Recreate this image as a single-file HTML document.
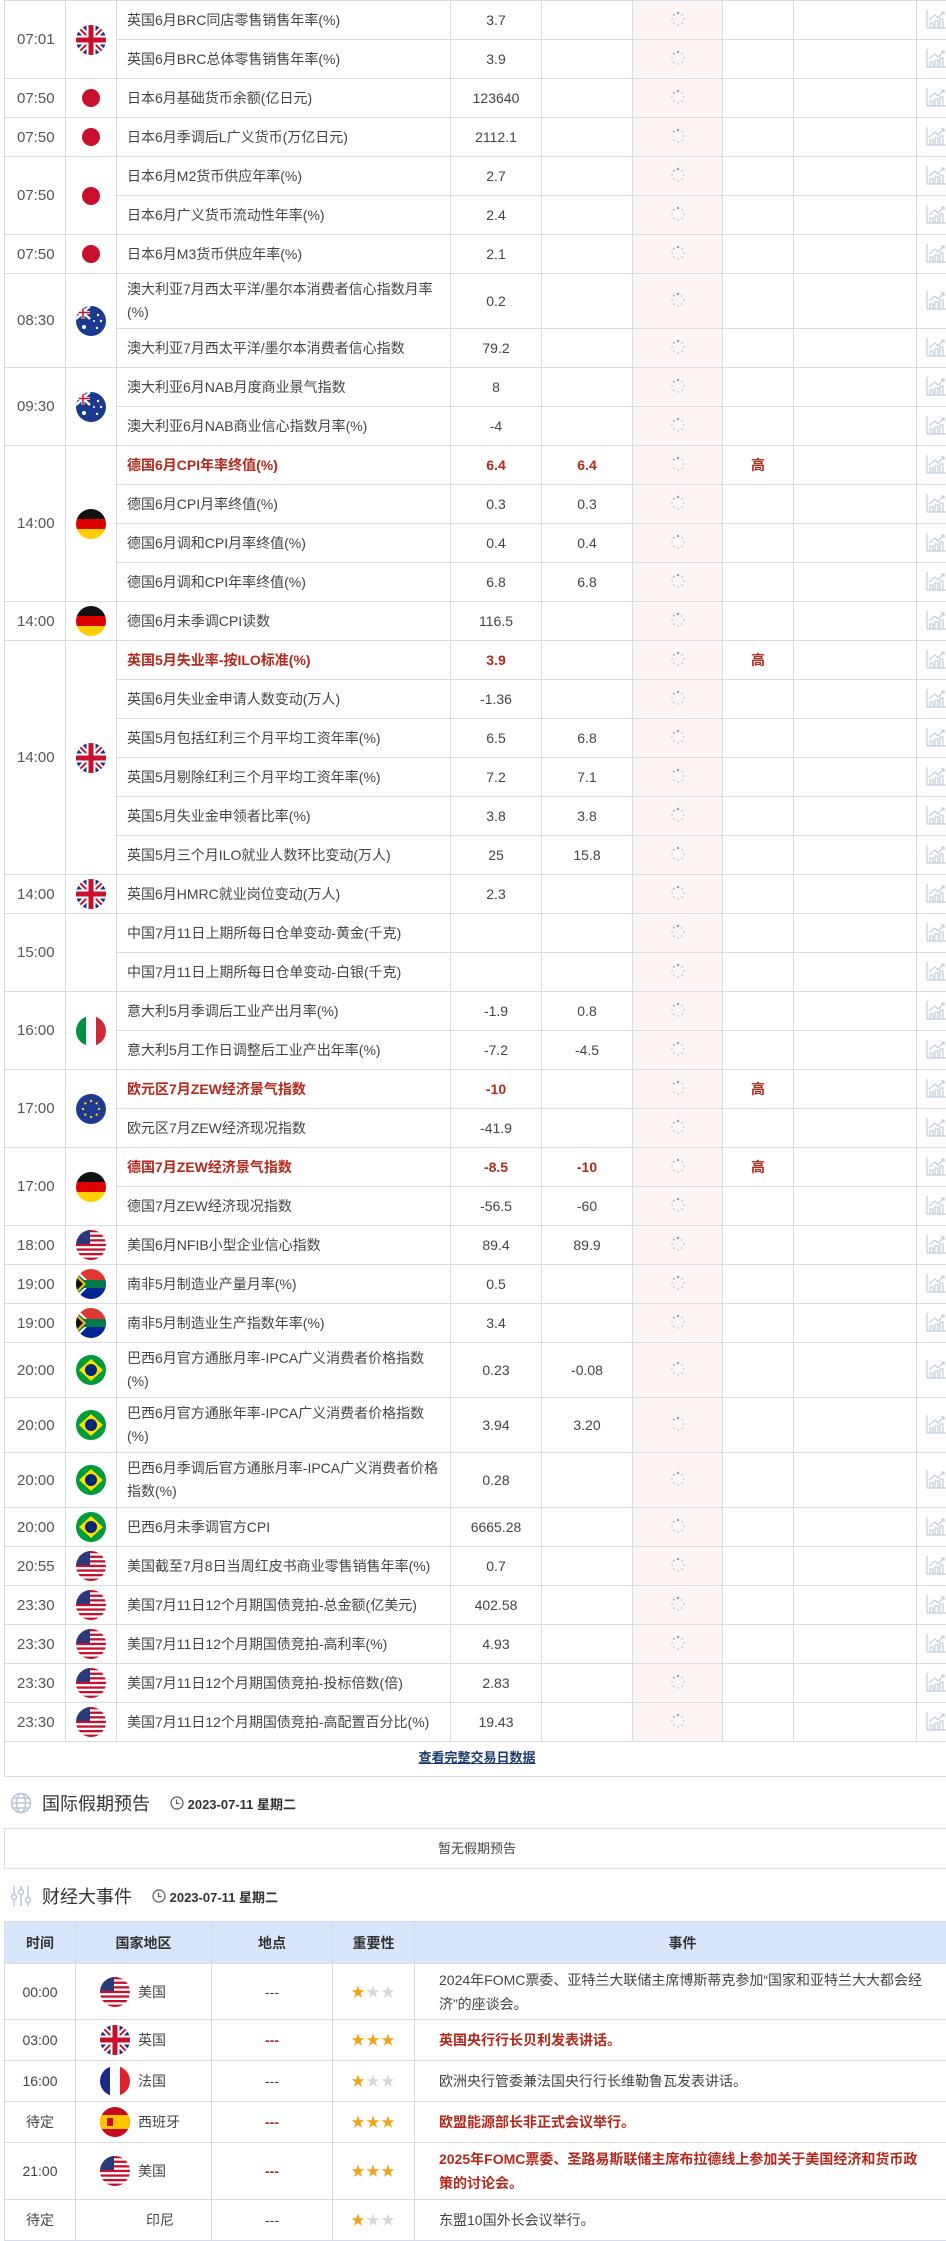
<!DOCTYPE html>
<html><head><meta charset="utf-8">
<style>
*{box-sizing:border-box;margin:0;padding:0}
body{width:946px;height:2237px;overflow:hidden;background:#fff;font-family:"Liberation Sans","Noto Sans CJK SC",sans-serif;color:#444;position:relative}
table{border-collapse:collapse;table-layout:fixed}
#main{position:absolute;left:4px;top:0;width:962px}
#main td{border:1px solid #d5dce6;font-size:14px;vertical-align:middle;padding:0}
#main tr{height:39px}
#main tr.t2{height:55px}
#main td.tm{padding-left:12px;font-size:15px;color:#555}
#main td.fl{text-align:center}
#main td.nm{padding-left:10px;padding-right:6px;line-height:23px}
#main td.v{text-align:center;font-size:14px}
#main td.pk{background:#fdf4f4;text-align:center}
#main td.ch{text-align:left;padding-left:9px}
.r{color:#b3291b;font-weight:bold}
svg.f{width:30px;height:30px;vertical-align:middle;display:inline-block}
.link{position:absolute;left:4px;top:1741px;width:946px;height:36px;border:1px solid #d5dce6;border-top:none;text-align:center;line-height:34px;font-size:13px;font-weight:bold;color:#1c3b6e;text-decoration:underline}
.hd{position:absolute;left:10px;height:24px;display:flex;align-items:center}
.hd .tt{font-size:18px;color:#333;margin-left:10px}
.hd .dt{font-size:13px;font-weight:bold;color:#333;margin-left:20px;display:flex;align-items:center}
.box{position:absolute;left:4px;top:1828px;width:946px;height:41px;border:1px solid #d5dce6;text-align:center;line-height:39px;font-size:13px;color:#444}
#ev{position:absolute;left:4px;top:1921px;width:946px}
#ev td,#ev th{border:1px solid #d5dce6;font-size:14px;padding:0}
#ev th{background:#d7e6fa;height:42px;font-weight:bold;color:#333}
#ev td{text-align:center}
#ev td.e{text-align:left;padding-left:24px;padding-right:20px;line-height:24px}
#ev .cn{display:flex;align-items:center;padding-left:24px}
#ev .cn span{margin-left:8px}
.st{color:#f2a31a;font-size:14px;letter-spacing:1px}
.st i{color:#d8d8d8;font-style:normal}
</style></head><body>
<svg width="0" height="0" style="position:absolute">
<defs>
<clipPath id="c"><circle cx="15" cy="15" r="15"/></clipPath>
<symbol id="uk" viewBox="0 0 30 30"><g clip-path="url(#c)"><rect width="30" height="30" fill="#22307a"/><path d="M0 0L30 30M30 0L0 30" stroke="#fff" stroke-width="6"/><path d="M0 0L30 30M30 0L0 30" stroke="#c8102e" stroke-width="2"/><path d="M15 0V30M0 15H30" stroke="#fff" stroke-width="9"/><path d="M15 0V30M0 15H30" stroke="#c8102e" stroke-width="5"/></g></symbol>
<symbol id="jp" viewBox="0 0 30 30"><circle cx="15" cy="15" r="15" fill="#fff"/><circle cx="15" cy="15" r="9" fill="#c8102e"/></symbol>
<symbol id="au" viewBox="0 0 30 30"><g clip-path="url(#c)"><rect width="30" height="30" fill="#1a3a8f"/><rect width="14" height="13" fill="#1a3a8f"/><path d="M0 0L14 13M14 0L0 13" stroke="#fff" stroke-width="2.5"/><path d="M7 0V13M0 6.5H14" stroke="#fff" stroke-width="3"/><path d="M7 0V13M0 6.5H14" stroke="#c8102e" stroke-width="1.5"/><circle cx="8" cy="21" r="2" fill="#fff"/><circle cx="22" cy="9" r="1.2" fill="#fff"/><circle cx="25" cy="15" r="1.2" fill="#fff"/><circle cx="21" cy="22" r="1.2" fill="#fff"/><circle cx="18" cy="15" r="1" fill="#fff"/></g></symbol>
<symbol id="de" viewBox="0 0 30 30"><g clip-path="url(#c)"><rect width="30" height="10" fill="#111"/><rect y="10" width="30" height="10" fill="#dd0000"/><rect y="20" width="30" height="10" fill="#ffce00"/></g></symbol>
<symbol id="it" viewBox="0 0 30 30"><g clip-path="url(#c)"><rect width="10" height="30" fill="#009246"/><rect x="10" width="10" height="30" fill="#fff"/><rect x="20" width="10" height="30" fill="#ce2b37"/></g></symbol>
<symbol id="fr" viewBox="0 0 30 30"><g clip-path="url(#c)"><rect width="10" height="30" fill="#1a2a8a"/><rect x="10" width="10" height="30" fill="#fff"/><rect x="20" width="10" height="30" fill="#e1202e"/></g></symbol>
<symbol id="es" viewBox="0 0 30 30"><g clip-path="url(#c)"><rect width="30" height="30" fill="#c60b1e"/><rect y="8" width="30" height="14" fill="#ffc400"/><rect x="7" y="11" width="6" height="8" fill="#c60b1e"/></g></symbol>
<symbol id="eu" viewBox="0 0 30 30"><circle cx="15" cy="15" r="15" fill="#1f3a93"/><g fill="#ffcc00"><circle cx="15" cy="7" r="1.2"/><circle cx="15" cy="23" r="1.2"/><circle cx="7" cy="15" r="1.2"/><circle cx="23" cy="15" r="1.2"/><circle cx="9.3" cy="9.3" r="1.2"/><circle cx="20.7" cy="9.3" r="1.2"/><circle cx="9.3" cy="20.7" r="1.2"/><circle cx="20.7" cy="20.7" r="1.2"/></g></symbol>
<symbol id="us" viewBox="0 0 30 30"><g clip-path="url(#c)"><rect width="30" height="30" fill="#fff"/><g fill="#c8102e"><rect y="0" width="30" height="2.3"/><rect y="4.6" width="30" height="2.3"/><rect y="9.2" width="30" height="2.3"/><rect y="13.8" width="30" height="2.3"/><rect y="18.4" width="30" height="2.3"/><rect y="23" width="30" height="2.3"/><rect y="27.6" width="30" height="2.4"/></g><rect width="14" height="14" fill="#2a3a7a"/></g></symbol>
<symbol id="za" viewBox="0 0 30 30"><g clip-path="url(#c)"><rect width="30" height="15" fill="#de3831"/><rect y="15" width="30" height="15" fill="#002395"/><path d="M0 0L15 15L0 30" fill="#fff"/><path d="M-2 2L13 15L-2 28Z" fill="#007a4d"/><rect x="8" y="11" width="22" height="8" fill="#007a4d"/><path d="M0 5L10 15L0 25Z" fill="#ffb612"/><path d="M0 8L7 15L0 22Z" fill="#111"/></g></symbol>
<symbol id="br" viewBox="0 0 30 30"><circle cx="15" cy="15" r="15" fill="#009b3a"/><path d="M15 4L27 15L15 26L3 15Z" fill="#fedf00"/><circle cx="15" cy="15" r="6" fill="#002776"/></symbol>
<symbol id="sp" viewBox="0 0 16 16"><g fill="#c9d2e0"><circle cx="8" cy="2" r="1.2" fill="#8a9ab5"/><circle cx="12.2" cy="3.8" r="1"/><circle cx="14" cy="8" r="1"/><circle cx="12.2" cy="12.2" r="1"/><circle cx="8" cy="14" r="1"/><circle cx="3.8" cy="12.2" r="1"/><circle cx="2" cy="8" r="1"/><circle cx="3.8" cy="3.8" r="1" fill="#a7b3c7"/></g></symbol>
<symbol id="ch" viewBox="0 0 20 20"><g fill="none" stroke="#b8c3d6" stroke-width="1"><path d="M1 1V19H20"/><path d="M3 11L9 6L12 9L18 3M15 3H18V6"/><rect x="4" y="14" width="3" height="5"/><rect x="9" y="12" width="3" height="7"/><rect x="14" y="10" width="3" height="9"/></g></symbol>
</defs></svg>

<table id="main">
<colgroup><col style="width:61px"><col style="width:51px"><col style="width:334px"><col style="width:91px"><col style="width:91px"><col style="width:90px"><col style="width:71px"><col style="width:123px"><col style="width:50px"></colgroup>
<tr><td class="tm" rowspan="2">07:01</td><td class="fl" rowspan="2"><svg class="f"><use href="#uk"/></svg></td><td class="nm">英国6月BRC同店零售销售年率(%)</td><td class="v">3.7</td><td class="v"></td><td class="pk"><svg width="16" height="16"><use href="#sp"/></svg></td><td></td><td></td><td class="ch"><svg width="20" height="20"><use href="#ch"/></svg></td></tr>
<tr><td class="nm">英国6月BRC总体零售销售年率(%)</td><td class="v">3.9</td><td class="v"></td><td class="pk"><svg width="16" height="16"><use href="#sp"/></svg></td><td></td><td></td><td class="ch"><svg width="20" height="20"><use href="#ch"/></svg></td></tr>
<tr><td class="tm">07:50</td><td class="fl"><svg class="f"><use href="#jp"/></svg></td><td class="nm">日本6月基础货币余额(亿日元)</td><td class="v">123640</td><td class="v"></td><td class="pk"><svg width="16" height="16"><use href="#sp"/></svg></td><td></td><td></td><td class="ch"><svg width="20" height="20"><use href="#ch"/></svg></td></tr>
<tr><td class="tm">07:50</td><td class="fl"><svg class="f"><use href="#jp"/></svg></td><td class="nm">日本6月季调后L广义货币(万亿日元)</td><td class="v">2112.1</td><td class="v"></td><td class="pk"><svg width="16" height="16"><use href="#sp"/></svg></td><td></td><td></td><td class="ch"><svg width="20" height="20"><use href="#ch"/></svg></td></tr>
<tr><td class="tm" rowspan="2">07:50</td><td class="fl" rowspan="2"><svg class="f"><use href="#jp"/></svg></td><td class="nm">日本6月M2货币供应年率(%)</td><td class="v">2.7</td><td class="v"></td><td class="pk"><svg width="16" height="16"><use href="#sp"/></svg></td><td></td><td></td><td class="ch"><svg width="20" height="20"><use href="#ch"/></svg></td></tr>
<tr><td class="nm">日本6月广义货币流动性年率(%)</td><td class="v">2.4</td><td class="v"></td><td class="pk"><svg width="16" height="16"><use href="#sp"/></svg></td><td></td><td></td><td class="ch"><svg width="20" height="20"><use href="#ch"/></svg></td></tr>
<tr><td class="tm">07:50</td><td class="fl"><svg class="f"><use href="#jp"/></svg></td><td class="nm">日本6月M3货币供应年率(%)</td><td class="v">2.1</td><td class="v"></td><td class="pk"><svg width="16" height="16"><use href="#sp"/></svg></td><td></td><td></td><td class="ch"><svg width="20" height="20"><use href="#ch"/></svg></td></tr>
<tr class="t2"><td class="tm" rowspan="2">08:30</td><td class="fl" rowspan="2"><svg class="f"><use href="#au"/></svg></td><td class="nm">澳大利亚7月西太平洋/墨尔本消费者信心指数月率(%)</td><td class="v">0.2</td><td class="v"></td><td class="pk"><svg width="16" height="16"><use href="#sp"/></svg></td><td></td><td></td><td class="ch"><svg width="20" height="20"><use href="#ch"/></svg></td></tr>
<tr><td class="nm">澳大利亚7月西太平洋/墨尔本消费者信心指数</td><td class="v">79.2</td><td class="v"></td><td class="pk"><svg width="16" height="16"><use href="#sp"/></svg></td><td></td><td></td><td class="ch"><svg width="20" height="20"><use href="#ch"/></svg></td></tr>
<tr><td class="tm" rowspan="2">09:30</td><td class="fl" rowspan="2"><svg class="f"><use href="#au"/></svg></td><td class="nm">澳大利亚6月NAB月度商业景气指数</td><td class="v">8</td><td class="v"></td><td class="pk"><svg width="16" height="16"><use href="#sp"/></svg></td><td></td><td></td><td class="ch"><svg width="20" height="20"><use href="#ch"/></svg></td></tr>
<tr><td class="nm">澳大利亚6月NAB商业信心指数月率(%)</td><td class="v">-4</td><td class="v"></td><td class="pk"><svg width="16" height="16"><use href="#sp"/></svg></td><td></td><td></td><td class="ch"><svg width="20" height="20"><use href="#ch"/></svg></td></tr>
<tr><td class="tm" rowspan="4">14:00</td><td class="fl" rowspan="4"><svg class="f"><use href="#de"/></svg></td><td class="nm r">德国6月CPI年率终值(%)</td><td class="v r">6.4</td><td class="v r">6.4</td><td class="pk"><svg width="16" height="16"><use href="#sp"/></svg></td><td class="v r">高</td><td></td><td class="ch"><svg width="20" height="20"><use href="#ch"/></svg></td></tr>
<tr><td class="nm">德国6月CPI月率终值(%)</td><td class="v">0.3</td><td class="v">0.3</td><td class="pk"><svg width="16" height="16"><use href="#sp"/></svg></td><td></td><td></td><td class="ch"><svg width="20" height="20"><use href="#ch"/></svg></td></tr>
<tr><td class="nm">德国6月调和CPI月率终值(%)</td><td class="v">0.4</td><td class="v">0.4</td><td class="pk"><svg width="16" height="16"><use href="#sp"/></svg></td><td></td><td></td><td class="ch"><svg width="20" height="20"><use href="#ch"/></svg></td></tr>
<tr><td class="nm">德国6月调和CPI年率终值(%)</td><td class="v">6.8</td><td class="v">6.8</td><td class="pk"><svg width="16" height="16"><use href="#sp"/></svg></td><td></td><td></td><td class="ch"><svg width="20" height="20"><use href="#ch"/></svg></td></tr>
<tr><td class="tm">14:00</td><td class="fl"><svg class="f"><use href="#de"/></svg></td><td class="nm">德国6月未季调CPI读数</td><td class="v">116.5</td><td class="v"></td><td class="pk"><svg width="16" height="16"><use href="#sp"/></svg></td><td></td><td></td><td class="ch"><svg width="20" height="20"><use href="#ch"/></svg></td></tr>
<tr><td class="tm" rowspan="6">14:00</td><td class="fl" rowspan="6"><svg class="f"><use href="#uk"/></svg></td><td class="nm r">英国5月失业率-按ILO标准(%)</td><td class="v r">3.9</td><td class="v"></td><td class="pk"><svg width="16" height="16"><use href="#sp"/></svg></td><td class="v r">高</td><td></td><td class="ch"><svg width="20" height="20"><use href="#ch"/></svg></td></tr>
<tr><td class="nm">英国6月失业金申请人数变动(万人)</td><td class="v">-1.36</td><td class="v"></td><td class="pk"><svg width="16" height="16"><use href="#sp"/></svg></td><td></td><td></td><td class="ch"><svg width="20" height="20"><use href="#ch"/></svg></td></tr>
<tr><td class="nm">英国5月包括红利三个月平均工资年率(%)</td><td class="v">6.5</td><td class="v">6.8</td><td class="pk"><svg width="16" height="16"><use href="#sp"/></svg></td><td></td><td></td><td class="ch"><svg width="20" height="20"><use href="#ch"/></svg></td></tr>
<tr><td class="nm">英国5月剔除红利三个月平均工资年率(%)</td><td class="v">7.2</td><td class="v">7.1</td><td class="pk"><svg width="16" height="16"><use href="#sp"/></svg></td><td></td><td></td><td class="ch"><svg width="20" height="20"><use href="#ch"/></svg></td></tr>
<tr><td class="nm">英国5月失业金申领者比率(%)</td><td class="v">3.8</td><td class="v">3.8</td><td class="pk"><svg width="16" height="16"><use href="#sp"/></svg></td><td></td><td></td><td class="ch"><svg width="20" height="20"><use href="#ch"/></svg></td></tr>
<tr><td class="nm">英国5月三个月ILO就业人数环比变动(万人)</td><td class="v">25</td><td class="v">15.8</td><td class="pk"><svg width="16" height="16"><use href="#sp"/></svg></td><td></td><td></td><td class="ch"><svg width="20" height="20"><use href="#ch"/></svg></td></tr>
<tr><td class="tm">14:00</td><td class="fl"><svg class="f"><use href="#uk"/></svg></td><td class="nm">英国6月HMRC就业岗位变动(万人)</td><td class="v">2.3</td><td class="v"></td><td class="pk"><svg width="16" height="16"><use href="#sp"/></svg></td><td></td><td></td><td class="ch"><svg width="20" height="20"><use href="#ch"/></svg></td></tr>
<tr><td class="tm" rowspan="2">15:00</td><td class="fl" rowspan="2"></td><td class="nm">中国7月11日上期所每日仓单变动-黄金(千克)</td><td class="v"></td><td class="v"></td><td class="pk"><svg width="16" height="16"><use href="#sp"/></svg></td><td></td><td></td><td class="ch"><svg width="20" height="20"><use href="#ch"/></svg></td></tr>
<tr><td class="nm">中国7月11日上期所每日仓单变动-白银(千克)</td><td class="v"></td><td class="v"></td><td class="pk"><svg width="16" height="16"><use href="#sp"/></svg></td><td></td><td></td><td class="ch"><svg width="20" height="20"><use href="#ch"/></svg></td></tr>
<tr><td class="tm" rowspan="2">16:00</td><td class="fl" rowspan="2"><svg class="f"><use href="#it"/></svg></td><td class="nm">意大利5月季调后工业产出月率(%)</td><td class="v">-1.9</td><td class="v">0.8</td><td class="pk"><svg width="16" height="16"><use href="#sp"/></svg></td><td></td><td></td><td class="ch"><svg width="20" height="20"><use href="#ch"/></svg></td></tr>
<tr><td class="nm">意大利5月工作日调整后工业产出年率(%)</td><td class="v">-7.2</td><td class="v">-4.5</td><td class="pk"><svg width="16" height="16"><use href="#sp"/></svg></td><td></td><td></td><td class="ch"><svg width="20" height="20"><use href="#ch"/></svg></td></tr>
<tr><td class="tm" rowspan="2">17:00</td><td class="fl" rowspan="2"><svg class="f"><use href="#eu"/></svg></td><td class="nm r">欧元区7月ZEW经济景气指数</td><td class="v r">-10</td><td class="v"></td><td class="pk"><svg width="16" height="16"><use href="#sp"/></svg></td><td class="v r">高</td><td></td><td class="ch"><svg width="20" height="20"><use href="#ch"/></svg></td></tr>
<tr><td class="nm">欧元区7月ZEW经济现况指数</td><td class="v">-41.9</td><td class="v"></td><td class="pk"><svg width="16" height="16"><use href="#sp"/></svg></td><td></td><td></td><td class="ch"><svg width="20" height="20"><use href="#ch"/></svg></td></tr>
<tr><td class="tm" rowspan="2">17:00</td><td class="fl" rowspan="2"><svg class="f"><use href="#de"/></svg></td><td class="nm r">德国7月ZEW经济景气指数</td><td class="v r">-8.5</td><td class="v r">-10</td><td class="pk"><svg width="16" height="16"><use href="#sp"/></svg></td><td class="v r">高</td><td></td><td class="ch"><svg width="20" height="20"><use href="#ch"/></svg></td></tr>
<tr><td class="nm">德国7月ZEW经济现况指数</td><td class="v">-56.5</td><td class="v">-60</td><td class="pk"><svg width="16" height="16"><use href="#sp"/></svg></td><td></td><td></td><td class="ch"><svg width="20" height="20"><use href="#ch"/></svg></td></tr>
<tr><td class="tm">18:00</td><td class="fl"><svg class="f"><use href="#us"/></svg></td><td class="nm">美国6月NFIB小型企业信心指数</td><td class="v">89.4</td><td class="v">89.9</td><td class="pk"><svg width="16" height="16"><use href="#sp"/></svg></td><td></td><td></td><td class="ch"><svg width="20" height="20"><use href="#ch"/></svg></td></tr>
<tr><td class="tm">19:00</td><td class="fl"><svg class="f"><use href="#za"/></svg></td><td class="nm">南非5月制造业产量月率(%)</td><td class="v">0.5</td><td class="v"></td><td class="pk"><svg width="16" height="16"><use href="#sp"/></svg></td><td></td><td></td><td class="ch"><svg width="20" height="20"><use href="#ch"/></svg></td></tr>
<tr><td class="tm">19:00</td><td class="fl"><svg class="f"><use href="#za"/></svg></td><td class="nm">南非5月制造业生产指数年率(%)</td><td class="v">3.4</td><td class="v"></td><td class="pk"><svg width="16" height="16"><use href="#sp"/></svg></td><td></td><td></td><td class="ch"><svg width="20" height="20"><use href="#ch"/></svg></td></tr>
<tr class="t2"><td class="tm">20:00</td><td class="fl"><svg class="f"><use href="#br"/></svg></td><td class="nm">巴西6月官方通胀月率-IPCA广义消费者价格指数(%)</td><td class="v">0.23</td><td class="v">-0.08</td><td class="pk"><svg width="16" height="16"><use href="#sp"/></svg></td><td></td><td></td><td class="ch"><svg width="20" height="20"><use href="#ch"/></svg></td></tr>
<tr class="t2"><td class="tm">20:00</td><td class="fl"><svg class="f"><use href="#br"/></svg></td><td class="nm">巴西6月官方通胀年率-IPCA广义消费者价格指数(%)</td><td class="v">3.94</td><td class="v">3.20</td><td class="pk"><svg width="16" height="16"><use href="#sp"/></svg></td><td></td><td></td><td class="ch"><svg width="20" height="20"><use href="#ch"/></svg></td></tr>
<tr class="t2"><td class="tm">20:00</td><td class="fl"><svg class="f"><use href="#br"/></svg></td><td class="nm">巴西6月季调后官方通胀月率-IPCA广义消费者价格指数(%)</td><td class="v">0.28</td><td class="v"></td><td class="pk"><svg width="16" height="16"><use href="#sp"/></svg></td><td></td><td></td><td class="ch"><svg width="20" height="20"><use href="#ch"/></svg></td></tr>
<tr><td class="tm">20:00</td><td class="fl"><svg class="f"><use href="#br"/></svg></td><td class="nm">巴西6月未季调官方CPI</td><td class="v">6665.28</td><td class="v"></td><td class="pk"><svg width="16" height="16"><use href="#sp"/></svg></td><td></td><td></td><td class="ch"><svg width="20" height="20"><use href="#ch"/></svg></td></tr>
<tr><td class="tm">20:55</td><td class="fl"><svg class="f"><use href="#us"/></svg></td><td class="nm">美国截至7月8日当周红皮书商业零售销售年率(%)</td><td class="v">0.7</td><td class="v"></td><td class="pk"><svg width="16" height="16"><use href="#sp"/></svg></td><td></td><td></td><td class="ch"><svg width="20" height="20"><use href="#ch"/></svg></td></tr>
<tr><td class="tm">23:30</td><td class="fl"><svg class="f"><use href="#us"/></svg></td><td class="nm">美国7月11日12个月期国债竞拍-总金额(亿美元)</td><td class="v">402.58</td><td class="v"></td><td class="pk"><svg width="16" height="16"><use href="#sp"/></svg></td><td></td><td></td><td class="ch"><svg width="20" height="20"><use href="#ch"/></svg></td></tr>
<tr><td class="tm">23:30</td><td class="fl"><svg class="f"><use href="#us"/></svg></td><td class="nm">美国7月11日12个月期国债竞拍-高利率(%)</td><td class="v">4.93</td><td class="v"></td><td class="pk"><svg width="16" height="16"><use href="#sp"/></svg></td><td></td><td></td><td class="ch"><svg width="20" height="20"><use href="#ch"/></svg></td></tr>
<tr><td class="tm">23:30</td><td class="fl"><svg class="f"><use href="#us"/></svg></td><td class="nm">美国7月11日12个月期国债竞拍-投标倍数(倍)</td><td class="v">2.83</td><td class="v"></td><td class="pk"><svg width="16" height="16"><use href="#sp"/></svg></td><td></td><td></td><td class="ch"><svg width="20" height="20"><use href="#ch"/></svg></td></tr>
<tr><td class="tm">23:30</td><td class="fl"><svg class="f"><use href="#us"/></svg></td><td class="nm">美国7月11日12个月期国债竞拍-高配置百分比(%)</td><td class="v">19.43</td><td class="v"></td><td class="pk"><svg width="16" height="16"><use href="#sp"/></svg></td><td></td><td></td><td class="ch"><svg width="20" height="20"><use href="#ch"/></svg></td></tr>
</table>

<div class="link">查看完整交易日数据</div>

<div class="hd" style="top:1791px">
<svg width="22" height="22" viewBox="0 0 22 22" fill="none" stroke="#b9c6d8" stroke-width="1.5"><circle cx="11" cy="11" r="9.5"/><ellipse cx="11" cy="11" rx="4.5" ry="9.5"/><path d="M1.5 11H20.5M3 6H19M3 16H19"/></svg>
<span class="tt">国际假期预告</span>
<span class="dt"><svg width="14" height="14" viewBox="0 0 14 14" fill="none" stroke="#555" stroke-width="1.2"><circle cx="7" cy="7" r="6"/><path d="M6.5 3.5V7.5H9.5"/></svg>&nbsp;2023-07-11 星期二</span>
</div>
<div class="box">暂无假期预告</div>

<div class="hd" style="top:1884px">
<svg width="22" height="22" viewBox="0 0 22 22" fill="none" stroke="#b9c6d8" stroke-width="1.5"><path d="M4 1V9M4 15V21M11 1V4M11 10V21M18 1V12M18 18V21"/><circle cx="4" cy="12" r="2.5"/><circle cx="11" cy="7" r="2.5"/><circle cx="18" cy="15" r="2.5"/></svg>
<span class="tt">财经大事件</span>
<span class="dt"><svg width="14" height="14" viewBox="0 0 14 14" fill="none" stroke="#555" stroke-width="1.2"><circle cx="7" cy="7" r="6"/><path d="M6.5 3.5V7.5H9.5"/></svg>&nbsp;2023-07-11 星期二</span>
</div>

<table id="ev">
<colgroup><col style="width:71px"><col style="width:136px"><col style="width:121px"><col style="width:82px"><col style="width:536px"></colgroup>
<tr><th>时间</th><th>国家地区</th><th>地点</th><th>重要性</th><th>事件</th></tr>
<tr style="height:56px"><td>00:00</td><td><div class="cn"><svg class="f"><use href="#us"/></svg><span>美国</span></div></td><td>---</td><td class="st">★<i>★★</i></td><td class="e">2024年FOMC票委、亚特兰大联储主席博斯蒂克参加“国家和亚特兰大大都会经济”的座谈会。</td></tr>
<tr style="height:41px"><td>03:00</td><td><div class="cn"><svg class="f"><use href="#uk"/></svg><span>英国</span></div></td><td class="r">---</td><td class="st">★★★</td><td class="e r">英国央行行长贝利发表讲话。</td></tr>
<tr style="height:41px"><td>16:00</td><td><div class="cn"><svg class="f"><use href="#fr"/></svg><span>法国</span></div></td><td>---</td><td class="st">★<i>★★</i></td><td class="e">欧洲央行管委兼法国央行行长维勒鲁瓦发表讲话。</td></tr>
<tr style="height:41px"><td>待定</td><td><div class="cn"><svg class="f"><use href="#es"/></svg><span>西班牙</span></div></td><td class="r">---</td><td class="st">★★★</td><td class="e r">欧盟能源部长非正式会议举行。</td></tr>
<tr style="height:57px"><td>21:00</td><td><div class="cn"><svg class="f"><use href="#us"/></svg><span>美国</span></div></td><td class="r">---</td><td class="st">★★★</td><td class="e r">2025年FOMC票委、圣路易斯联储主席布拉德线上参加关于美国经济和货币政策的讨论会。</td></tr>
<tr style="height:41px"><td>待定</td><td><div class="cn" style="padding-left:62px"><span>印尼</span></div></td><td>---</td><td class="st">★<i>★★</i></td><td class="e">东盟10国外长会议举行。</td></tr>
</table>
</body></html>
